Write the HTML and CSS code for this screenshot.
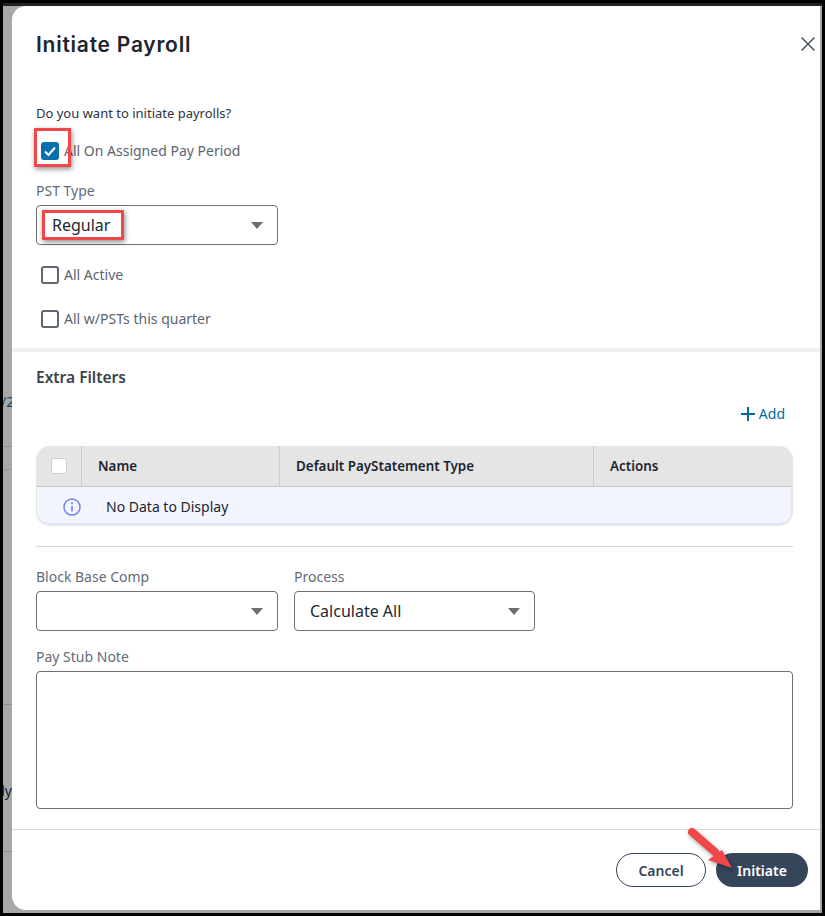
FILE: index.html
```html
<!DOCTYPE html>
<html lang="en">
<head>
<meta charset="utf-8">
<title>Initiate Payroll</title>
<link rel="stylesheet" href="styles.css">
</head>
<body>
<div class="backdrop">
  <div class="bg-line bg-line-1"></div>
  <div class="bg-line bg-line-2"></div>
  <div class="bg-line bg-line-3"></div>
  <div class="bg-line bg-line-4"></div>
  <span class="bg-text bg-text-1">/2</span>
  <span class="bg-text bg-text-2">ly</span>

  <section class="modal">
    <header class="modal-head">
      <h1 class="title">Initiate Payroll</h1>
      <svg class="close" viewBox="0 0 14 14" width="14" height="14"><path d="M.5.5l13 13M13.5.5l-13 13" fill="none" stroke="#4a5560" stroke-width="1.5"/></svg>
    </header>

    <div class="top-section">
      <p class="question">Do you want to initiate payrolls?</p>
      <label class="check-row first-check">
        <span class="box checked"><svg viewBox="0 0 18 18" width="18" height="18"><path d="M4 9.500l3.500 3.500L14 5.500" fill="none" stroke="#fff" stroke-width="2"/></svg></span>
        <span>All On Assigned Pay Period</span>
      </label>
      <div class="field-label pst-label">PST Type</div>
      <div class="select"><span>Regular</span><i class="caret"></i></div>
      <label class="check-row active-check"><span class="box"></span><span>All Active</span></label>
      <label class="check-row quarter-check"><span class="box"></span><span>All w/PSTs this quarter</span></label>
    </div>

    <div class="lower-section">
      <h2 class="section-title">Extra Filters</h2>
      <div class="add-row">
        <span class="add">
          <svg viewBox="0 0 14 14" width="14" height="14"><path d="M7 0v14M0 7h14" fill="none" stroke="#006a9e" stroke-width="2"/></svg>
          Add
        </span>
      </div>
      <div class="table">
        <div class="thead">
          <div class="th th-check"><span class="head-box"></span></div>
          <div class="th th-name">Name</div>
          <div class="th th-type">Default PayStatement Type</div>
          <div class="th th-actions">Actions</div>
        </div>
        <div class="empty">
          <svg viewBox="0 0 18 18" width="18" height="18"><circle cx="9" cy="9" r="8" fill="none" stroke="#6e80f0" stroke-width="1.4"/><circle cx="9" cy="5.300" r="1.100" fill="#6e80f0"/><path d="M9 8v5.500" stroke="#6e80f0" stroke-width="1.600"/></svg>
          <span>No Data to Display</span>
        </div>
      </div>
      <hr class="rule">
      <div class="field-row">
        <div class="field">
          <div class="field-label">Block Base Comp</div>
          <div class="select"><span></span><i class="caret"></i></div>
        </div>
        <div class="field">
          <div class="field-label">Process</div>
          <div class="select"><span>Calculate All</span><i class="caret"></i></div>
        </div>
      </div>
      <div class="field-label note-label">Pay Stub Note</div>
      <div class="note"></div>
    </div>

    <footer class="modal-foot">
      <button class="btn btn-ghost">Cancel</button>
      <button class="btn btn-solid">Initiate</button>
    </footer>
  </section>

  <div class="mark mark-check"></div>
  <div class="mark mark-regular"></div>
  <svg class="arrow" viewBox="0 0 60 50" width="60" height="50">
    <path d="M5 5L28 25" stroke="#f04848" stroke-width="8" stroke-linecap="round" fill="none"/>
    <path d="M35 23L21 33L45 41Z" fill="#f04848"/>
  </svg>
</div>
</body>
</html>
```

FILE: styles.css
```css
* { box-sizing: border-box; }
html, body { margin: 0; height: 100%; }
body {
  background: #000;
  font-family: "Noto Sans", "Open Sans", sans-serif;
  color: #1d2630;
  overflow: hidden;
}
.backdrop {
  position: relative;
  width: 825px;
  height: 916px;
  padding: 6px 3px 3px 12px;
  background: linear-gradient(#000 0 3px, #222 3px 6px, #a8a8a8 6px);
  clip-path: inset(0 3px 3px 3px);
}
.bg-line { position: absolute; left: 3px; width: 9px; height: 1px; background: #8f8f8f; }
.bg-line-1 { top: 446px; }
.bg-line-2 { top: 469px; background: #989898; }
.bg-line-3 { top: 704px; }
.bg-line-4 { top: 851px; }
.bg-text { position: absolute; font-size: 14px; line-height: 18px; overflow: hidden; }
.bg-text-1 { left: 1px; width: 11px; top: 393px; color: #0a4a6c; text-align: right; }
.bg-text-2 { left: 3px; width: 9px; top: 782px; color: #10222f; direction: rtl; }
.modal {
  width: 808px;
  height: 904px;
  background: #fff;
  border-radius: 14px 0 0 14px;
  display: flex;
  flex-direction: column;
}
.modal-head {
  height: 62px;
  padding: 0 5px 0 24px;
  display: flex;
  align-items: center;
  justify-content: space-between;
  flex: none;
}
.title {
  margin: 15px 0 0;
  font-family: Inter, "Noto Sans", sans-serif;
  font-size: 21px;
  font-weight: 600;
  line-height: 24px;
  letter-spacing: .75px;
  color: #1b2530;
}
.close { margin: 14px 0 0; }
.top-section {
  height: 284px;
  padding: 36px 24px 0;
  border-bottom: 4px solid #f0f0f0;
  flex: none;
}
.question { margin: 0; font-size: 13px; line-height: 18px; color: #2b343e; }
.check-row {
  display: flex;
  align-items: center;
  gap: 5px;
  margin-left: 5px;
  font-size: 14px;
  line-height: 18px;
  color: #5b6570;
}
.first-check { margin-top: 20px; }
.box {
  width: 18px;
  height: 18px;
  flex: none;
  border: 2px solid #5f6770;
  border-radius: 3px;
  background: #fff;
}
.box.checked {
  border: 0;
  background: #0a6fae;
  display: block;
}
.box svg { display: block; }
.field-label { font-size: 14px; line-height: 20px; color: #626c76; }
.pst-label { margin-top: 21px; }
.select {
  width: 242px;
  height: 40px;
  margin-top: 4px;
  padding: 0 15px;
  border: 1px solid #6f6f6f;
  border-radius: 4px;
  display: flex;
  align-items: center;
  justify-content: space-between;
  font-size: 16px;
  color: #20282f;
  background: #fff;
}
.caret {
  width: 0;
  height: 0;
  margin-right: -1px;
  border-left: 6px solid transparent;
  border-right: 6px solid transparent;
  border-top: 7px solid #6b6f74;
}
.active-check { margin-top: 21px; }
.quarter-check { margin-top: 26px; }
.lower-section { padding: 0 27px 0 24px; flex: none; height: 477px; }
.section-title {
  margin: 15px 0 0;
  font-size: 15.500px;
  font-weight: 600;
  line-height: 20px;
  color: #39424c;
}
.add-row {
  display: flex;
  justify-content: flex-end;
  margin-top: 17px;
  padding-right: 8px;
}
.add {
  display: flex;
  align-items: center;
  gap: 4px;
  font-size: 14px;
  line-height: 20px;
  color: #006a9e;
}
.table {
  width: 757px;
  height: 80px;
  margin-top: 22px;
  border-radius: 14px;
  overflow: hidden;
  border: 1px solid #e6e6e6;
  border-top: 0;
  background: #f2f5fe;
  box-shadow: inset 0 -2px 0 #e3e7f8, inset -1px 0 0 #e3e7f8;
}
.thead {
  display: flex;
  height: 41px;
  background: #e5e5e5;
  border-bottom: 1px solid #c4c4c4;
  font-size: 13.400px;
  font-weight: 600;
  color: #1d2630;
}
.th {
  display: flex;
  align-items: center;
  padding-left: 16px;
  border-right: 1px solid #cfcfcf;
}
.th-check { width: 45px; padding-left: 14px; }
.th-name { width: 198px; }
.th-type { width: 314px; }
.th-actions { flex: 1; border-right: 0; }
.head-box {
  width: 16px;
  height: 16px;
  background: #fff;
  border: 1px solid #d0d0d0;
  border-radius: 2px;
}
.empty {
  display: flex;
  align-items: center;
  height: 39px;
  padding-left: 26px;
  gap: 25px;
  font-size: 14px;
  color: #1d2630;
}
.empty svg { flex: none; }
.rule { margin: 20px 0 0; border: 0; border-top: 1px solid #d6d6d6; }
.field-row { display: flex; gap: 16px; margin-top: 20px; }
.field .select { margin-top: 4px; }
.field:last-child .select { width: 241px; }
.note-label { margin-top: 16px; }
.note {
  width: 757px;
  height: 138px;
  margin-top: 4px;
  border: 1px solid #6f6f6f;
  border-radius: 4px;
}
.modal-foot {
  flex: 1;
  border-top: 1px solid #dcdcdc;
  display: flex;
  justify-content: flex-end;
  gap: 10px;
  padding: 23px 12px 0 0;
}
.btn {
  height: 34px;
  border-radius: 17px;
  font-family: inherit;
  font-size: 14px;
  font-weight: 600;
  padding: 0;
}
.btn-ghost { width: 90px; background: #fff; color: #35455a; border: 1px solid #35455a; }
.btn-solid { width: 92px; background: #35455a; color: #fff; border: 0; }
.mark {
  position: absolute;
  border: 3px solid #f2474a;
  box-shadow: 1px 2px 5px rgba(0,0,0,.45);
}
.mark-check { left: 34px; top: 128px; width: 37px; height: 39px; }
.mark-regular { left: 42px; top: 210px; width: 82px; height: 30px; }
.arrow { position: absolute; left: 687px; top: 827px; filter: drop-shadow(1px 2px 2px rgba(0,0,0,.35)); }
```
